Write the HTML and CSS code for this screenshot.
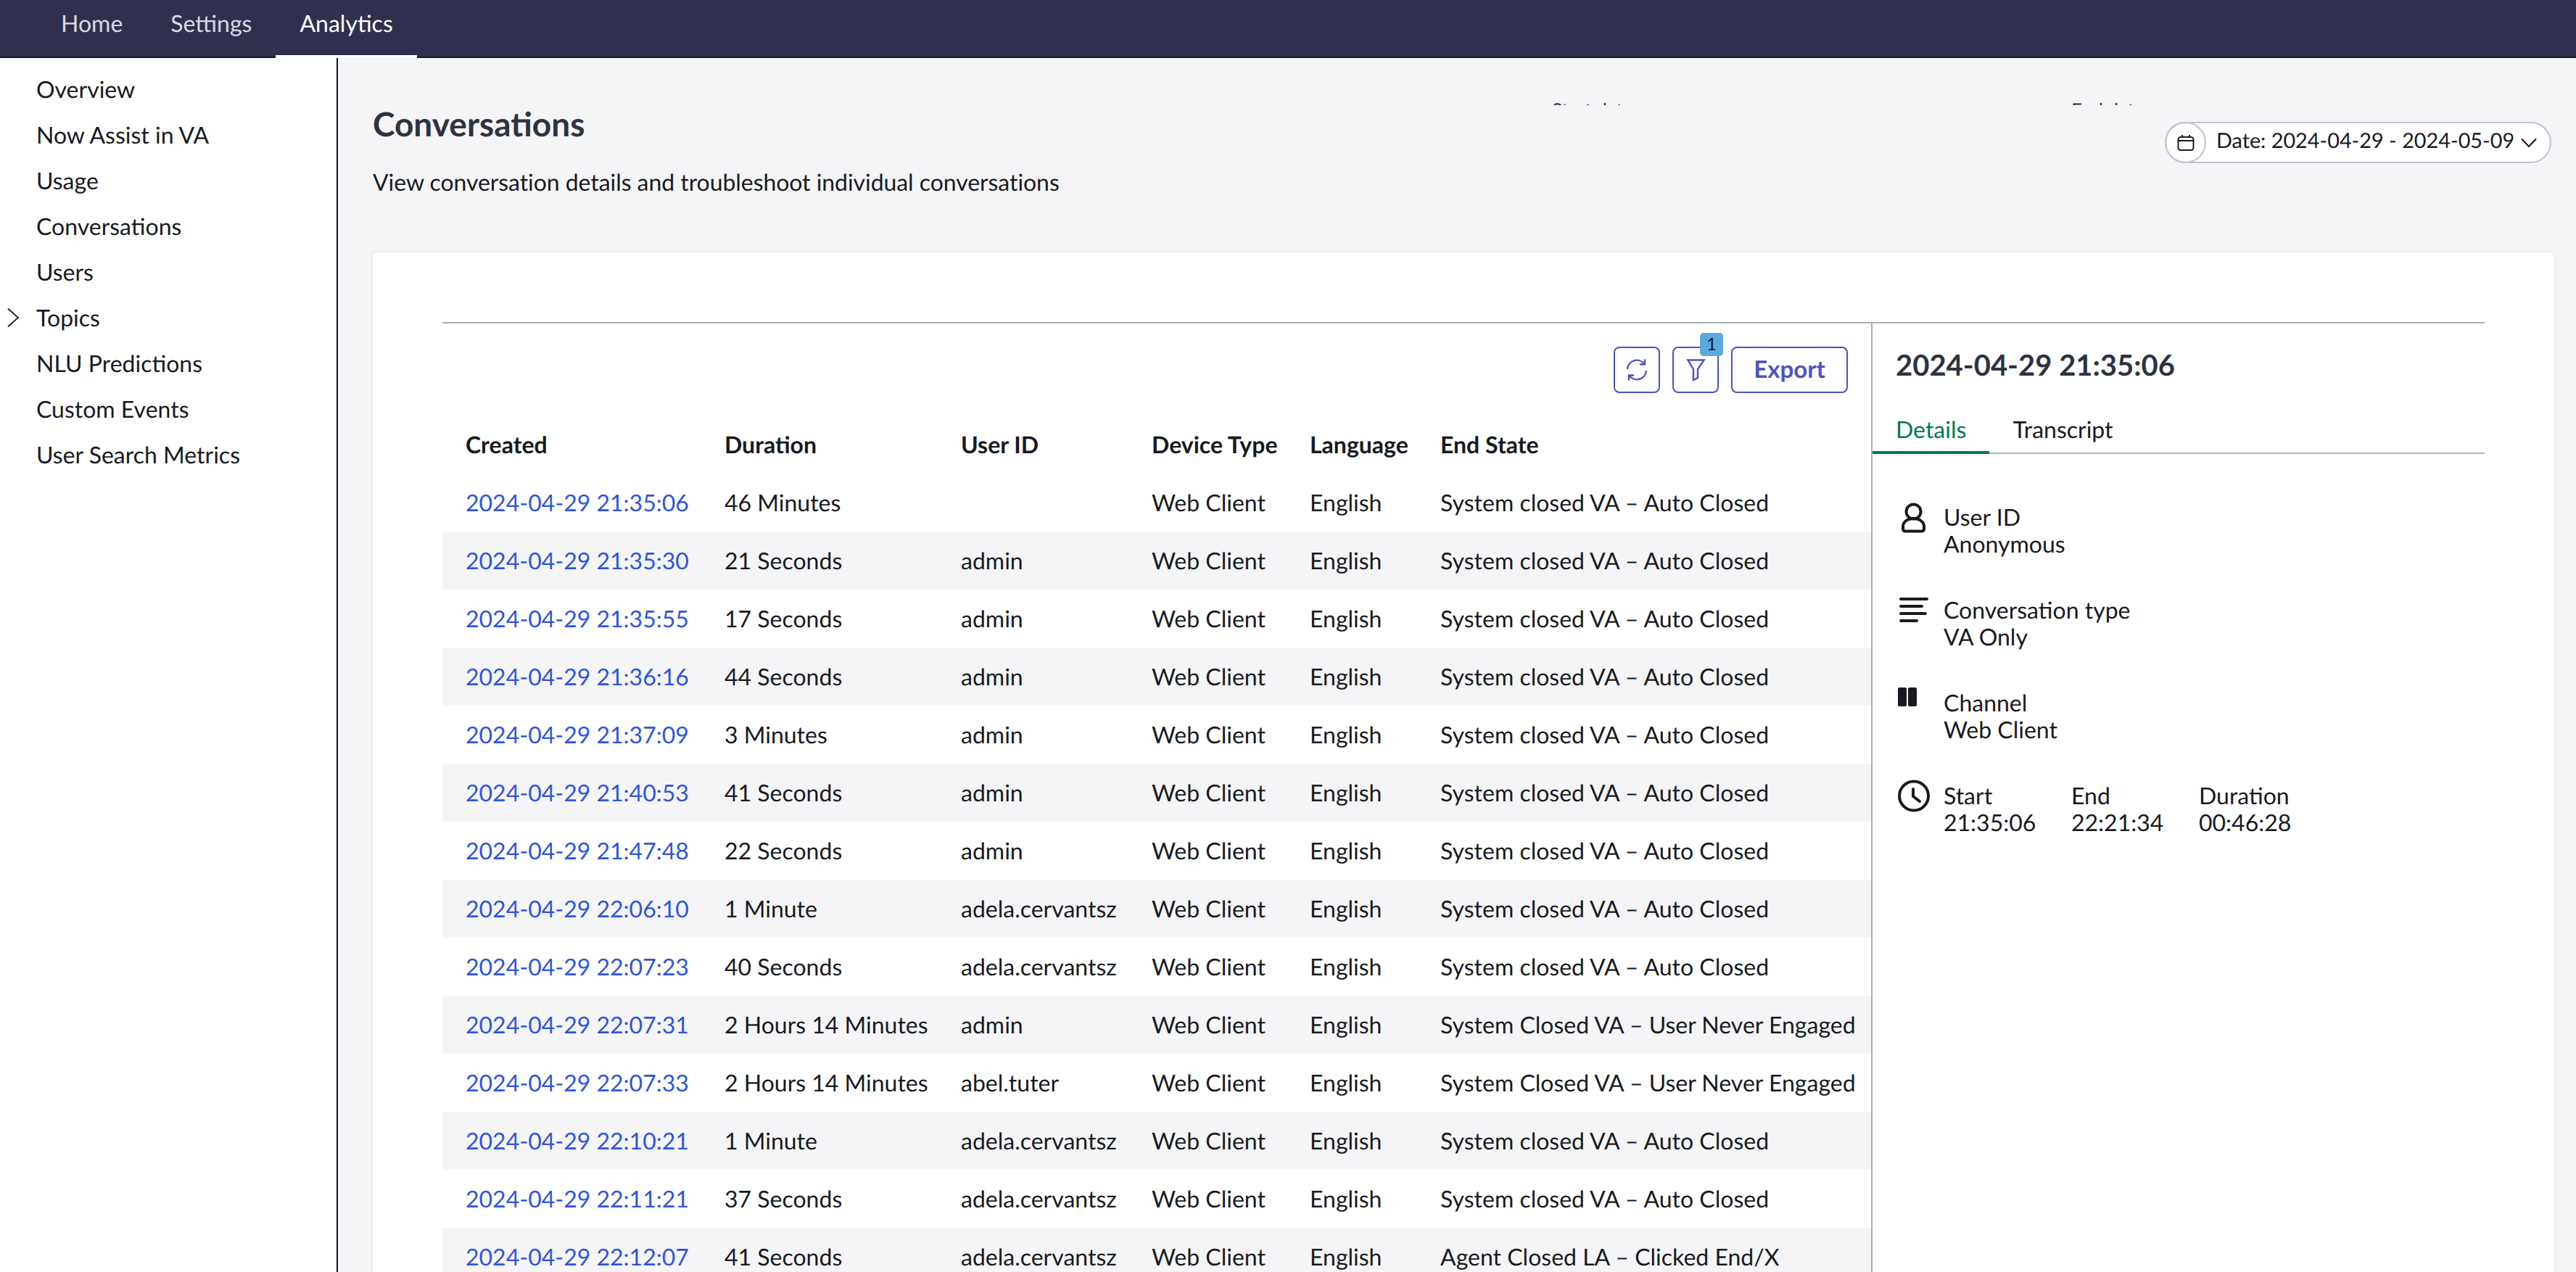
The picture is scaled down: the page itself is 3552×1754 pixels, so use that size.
FILE: index.html
```html
<!DOCTYPE html>
<html lang="en">
<head>
  <meta charset="UTF-8">
  <title>Conversations - Analytics</title>
  <link rel="stylesheet" href="styles.css">
</head>
<body>

<!-- Top nav -->
<div class="topnav">
  <a href="#">Home</a>
  <a href="#">Settings</a>
  <a href="#" class="active">Analytics</a>
</div>

<div class="page">

  <!-- Sidebar -->
  <div class="sidebar">
    <a href="#">Overview</a>
    <a href="#">Now Assist in VA</a>
    <a href="#">Usage</a>
    <a href="#">Conversations</a>
    <a href="#">Users</a>
    <a href="#" class="expandable">
      <svg width="40" height="28" viewBox="0 0 40 28" fill="none" stroke="#181a1f" stroke-width="1.7"><path d="M1 1.500 15 14 1 26.500"/></svg>
      Topics
    </a>
    <a href="#">NLU Predictions</a>
    <a href="#">Custom Events</a>
    <a href="#">User Search Metrics</a>
  </div>

  <!-- Main Content -->
  <div class="main-content">

    <div class="header">
      <div>
        <h1>Conversations</h1>
        <p>View conversation details and troubleshoot individual conversations</p>
      </div>
      <div class="clipped-label start-label"><span>Start date</span></div>
      <div class="clipped-label end-label"><span>End date</span></div>
      <div class="date-pill">
        <span class="date-icon">
          <svg width="24" height="24" viewBox="0 0 24 24" fill="none" stroke="#181a1f" stroke-width="2"><rect x="1.5" y="4" width="21" height="18" rx="3.5"/><path d="M1.5 9h21M7 1v4M17 1v4"/></svg>
        </span>
        <span class="date-text">Date: 2024-04-29 - 2024-05-09</span>
        <svg class="date-chevron" width="22" height="14" viewBox="0 0 22 14" fill="none" stroke="#181a1f" stroke-width="2"><path d="M1 1.5 11 12 21 1.5"/></svg>
      </div>
    </div>

    <div class="card">
      <div class="split">

        <!-- Conversations table -->
        <div class="table-side">
          <div class="toolbar">
            <button class="icon-btn">
              <svg width="32" height="32" viewBox="0 0 32 32" fill="none" stroke="#4f52bb" stroke-width="2.4"><path d="M3 15A13 13 0 0 1 26 7.5"/><path d="M27 1.5V8.5H20"/><path d="M29 17A13 13 0 0 1 6 24.5"/><path d="M5 30.5V23.5H12"/></svg>
            </button>
            <button class="icon-btn">
              <svg width="32" height="32" viewBox="0 0 32 32" fill="none" stroke="#4f52bb" stroke-width="2.4"><path d="M5.5 2.5H27.5L19 15V27L13 30V15Z"/></svg>
              <span class="badge">1</span>
            </button>
            <button class="export-btn">Export</button>
          </div>

          <table>
            <thead>
              <tr>
                <th class="col-created">Created</th>
                <th class="col-duration">Duration</th>
                <th class="col-user">User ID</th>
                <th class="col-device">Device Type</th>
                <th class="col-lang">Language</th>
                <th>End State</th>
              </tr>
            </thead>
            <tbody>
              <tr><td><a href="#">2024-04-29 21:35:06</a></td><td>46 Minutes</td><td></td><td>Web Client</td><td>English</td><td>System closed VA – Auto Closed</td></tr>
              <tr><td><a href="#">2024-04-29 21:35:30</a></td><td>21 Seconds</td><td>admin</td><td>Web Client</td><td>English</td><td>System closed VA – Auto Closed</td></tr>
              <tr><td><a href="#">2024-04-29 21:35:55</a></td><td>17 Seconds</td><td>admin</td><td>Web Client</td><td>English</td><td>System closed VA – Auto Closed</td></tr>
              <tr><td><a href="#">2024-04-29 21:36:16</a></td><td>44 Seconds</td><td>admin</td><td>Web Client</td><td>English</td><td>System closed VA – Auto Closed</td></tr>
              <tr><td><a href="#">2024-04-29 21:37:09</a></td><td>3 Minutes</td><td>admin</td><td>Web Client</td><td>English</td><td>System closed VA – Auto Closed</td></tr>
              <tr><td><a href="#">2024-04-29 21:40:53</a></td><td>41 Seconds</td><td>admin</td><td>Web Client</td><td>English</td><td>System closed VA – Auto Closed</td></tr>
              <tr><td><a href="#">2024-04-29 21:47:48</a></td><td>22 Seconds</td><td>admin</td><td>Web Client</td><td>English</td><td>System closed VA – Auto Closed</td></tr>
              <tr><td><a href="#">2024-04-29 22:06:10</a></td><td>1 Minute</td><td>adela.cervantsz</td><td>Web Client</td><td>English</td><td>System closed VA – Auto Closed</td></tr>
              <tr><td><a href="#">2024-04-29 22:07:23</a></td><td>40 Seconds</td><td>adela.cervantsz</td><td>Web Client</td><td>English</td><td>System closed VA – Auto Closed</td></tr>
              <tr><td><a href="#">2024-04-29 22:07:31</a></td><td>2 Hours 14 Minutes</td><td>admin</td><td>Web Client</td><td>English</td><td>System Closed VA – User Never Engaged</td></tr>
              <tr><td><a href="#">2024-04-29 22:07:33</a></td><td>2 Hours 14 Minutes</td><td>abel.tuter</td><td>Web Client</td><td>English</td><td>System Closed VA – User Never Engaged</td></tr>
              <tr><td><a href="#">2024-04-29 22:10:21</a></td><td>1 Minute</td><td>adela.cervantsz</td><td>Web Client</td><td>English</td><td>System closed VA – Auto Closed</td></tr>
              <tr><td><a href="#">2024-04-29 22:11:21</a></td><td>37 Seconds</td><td>adela.cervantsz</td><td>Web Client</td><td>English</td><td>System closed VA – Auto Closed</td></tr>
              <tr><td><a href="#">2024-04-29 22:12:07</a></td><td>41 Seconds</td><td>adela.cervantsz</td><td>Web Client</td><td>English</td><td>Agent Closed LA – Clicked End/X</td></tr>
            </tbody>
          </table>
        </div>

        <!-- Details panel -->
        <div class="detail-side">
          <h2>2024-04-29 21:35:06</h2>
          <div class="tabs">
            <div class="tab active">Details</div>
            <div class="tab">Transcript</div>
          </div>

          <div class="detail-row">
            <svg width="48" height="48" viewBox="0 0 48 48" fill="none" stroke="#181a1f" stroke-width="4"><circle cx="22.5" cy="14.5" r="10"/><path d="M8 35c0-6 6-11 14.5-11S37 29 37 35v3.500c0 2-1.500 3-3 3H11c-1.500 0-3-1-3-3Z"/></svg>
            <div>
              <div>User ID</div>
              <div>Anonymous</div>
            </div>
          </div>

          <div class="detail-row">
            <svg width="48" height="48" viewBox="0 0 48 48" fill="none" stroke="#181a1f" stroke-width="4" stroke-linecap="round"><path d="M5 7H41M5 17H34M5 27H39M5 37H27"/></svg>
            <div>
              <div>Conversation type</div>
              <div>VA Only</div>
            </div>
          </div>

          <div class="detail-row">
            <svg width="48" height="48" viewBox="0 0 48 48" fill="#181a1f"><rect x="1" y="1" width="12" height="26" rx="2"/><rect x="15" y="1" width="12" height="26" rx="2"/></svg>
            <div>
              <div>Channel</div>
              <div>Web Client</div>
            </div>
          </div>

          <div class="detail-row">
            <svg width="48" height="48" viewBox="0 0 48 48" fill="none" stroke="#181a1f" stroke-width="4" stroke-linecap="round"><circle cx="23" cy="22.500" r="20"/><path d="M22 13V23L31 30"/></svg>
            <div class="time-col">
              <div>Start</div>
              <div>21:35:06</div>
            </div>
            <div class="time-col">
              <div>End</div>
              <div>22:21:34</div>
            </div>
            <div class="time-col">
              <div>Duration</div>
              <div>00:46:28</div>
            </div>
          </div>
        </div>

      </div>
    </div>

  </div>
</div>

</body>
</html>
```

FILE: styles.css
```css
/* Base Styles */
* {
  margin: 0;
  padding: 0;
  box-sizing: border-box;
  font-family: Lato, "Open Sans", sans-serif;
  text-rendering: geometricPrecision;
}

html, body {
  height: 100%;
}

body {
  display: flex;
  flex-direction: column;
  overflow: hidden;
  font-size: 32px;
  color: #181a1f;
  background: #fff;
}

a {
  text-decoration: none;
  color: inherit;
}

/* Top nav */
.topnav {
  flex: none;
  display: flex;
  height: 80px;
  padding-left: 51px;
  background: #30304e;
  box-shadow: inset 0 -2px 0 #181a1f;
}

.topnav a {
  height: 80px;
  padding: 0 33px;
  line-height: 64px;
  color: #d9d9e0;
}

.topnav a.active {
  color: #fff;
  border-bottom: 4px solid #fff;
}

.page {
  flex: 1;
  display: flex;
  min-height: 0;
}

/* Sidebar */
.sidebar {
  flex: none;
  width: 466px;
  padding-top: 11px;
  background: #fff;
  border-right: 2px solid #181a1f;
}

.sidebar a {
  display: flex;
  align-items: center;
  height: 63px;
  padding-left: 50px;
}

.sidebar a.expandable {
  padding-left: 10px;
}

.sidebar a.expandable svg {
  flex: none;
}

/* Main Content */
.main-content {
  flex: 1;
  min-width: 0;
  padding: 0 30px 0 48px;
  background: #f5f5f7;
}

.header {
  position: relative;
  display: flex;
  justify-content: space-between;
  align-items: flex-start;
  height: 268px;
  padding: 88px 4px 0 0;
}

.header h1 {
  margin-top: -27px;
  font-size: 46px;
  line-height: 60px;
  font-weight: 700;
  color: #2e3340;
}

.header p {
  margin-top: 30px;
  line-height: 40px;
  letter-spacing: -0.06px;
}

.clipped-label {
  position: absolute;
  top: 62px;
  height: 3px;
  overflow: hidden;
  font-size: 26px;
  line-height: 26px;
  color: #2e3340;
}

.clipped-label span {
  display: block;
  margin-top: -4px;
}

.start-label {
  left: 1626px;
}

.end-label {
  left: 2342px;
}

.date-pill {
  display: flex;
  align-items: center;
  width: 533px;
  height: 57px;
  background: #fff;
  border: 2px solid #bfc3d0;
  border-radius: 29px;
}

.date-icon {
  flex: none;
  display: flex;
  align-items: center;
  justify-content: center;
  width: 57px;
  height: 57px;
  margin: 0 14px 0 -2px;
  border: 2px solid #bfc3d0;
  border-radius: 50%;
}

.date-text {
  padding-bottom: 5px;
  font-size: 28.8px;
  white-space: nowrap;
}

.date-chevron {
  flex: none;
  margin-left: auto;
  margin-right: 18px;
}

/* Card */
.card {
  height: 1800px;
  padding: 96px 96px 0;
  background: #fff;
  border-radius: 8px;
  box-shadow: 0 0 6px rgba(0, 0, 0, 0.08);
}

.split {
  display: flex;
  height: 100%;
  border-top: 2px solid #aab0b3;
}

.table-side {
  flex: none;
  width: 1970px;
}

.toolbar {
  display: flex;
  justify-content: flex-end;
  gap: 17px;
  padding: 32px 32px 0 0;
  margin-bottom: 31px;
}

.icon-btn, .export-btn {
  position: relative;
  display: flex;
  align-items: center;
  justify-content: center;
  height: 64px;
  background: #fff;
  border: 2px solid #4f52bb;
  border-radius: 8px;
}

.icon-btn {
  width: 64px;
}

.export-btn {
  width: 161px;
  padding-bottom: 2px;
  font-size: 33px;
  font-weight: 700;
  color: #4f52bb;
}

.badge {
  position: absolute;
  top: -21px;
  left: 36px;
  width: 32px;
  height: 32px;
  font-size: 24px;
  line-height: 32px;
  text-align: center;
  color: #181a1f;
  background: #5ca9e0;
  border-radius: 5px;
}

/* Table */
table {
  width: 100%;
  table-layout: fixed;
  border-collapse: collapse;
}

th, td {
  height: 80px;
  padding: 0 0 2px 33px;
  text-align: left;
  white-space: nowrap;
}

th:first-child, td:first-child {
  padding-left: 32px;
}

th {
  font-weight: 700;
}

tbody tr:nth-child(even) {
  background: #f5f5f7;
}

td a {
  color: #2e55dd;
}

.col-created { width: 356px; }
.col-duration { width: 326px; }
.col-user { width: 263px; }
.col-device { width: 218px; }
.col-lang { width: 180px; }

/* Details panel */
.detail-side {
  flex: 1;
  min-width: 0;
  border-left: 2px solid #aab0b3;
}

.detail-side h2 {
  height: 114px;
  padding-left: 32px;
  font-size: 40px;
  line-height: 114px;
  font-weight: 700;
  color: #2e3340;
}

.tabs {
  display: flex;
  height: 66px;
  margin-bottom: 68px;
  box-shadow: inset 0 -2px 0 #b0b5bd;
}

.tab {
  height: 66px;
  padding: 0 32px;
  line-height: 64px;
}

.tab.active {
  color: #007a53;
  border-bottom: 4px solid #007a53;
}

.detail-row {
  display: flex;
  height: 74px;
  margin-bottom: 54px;
  padding-left: 34px;
  line-height: 37px;
}

.detail-row svg {
  flex: none;
  width: 48px;
  height: 48px;
  margin: -3px 16px 0 0;
  overflow: visible;
}

.time-col {
  width: 176px;
}
```
